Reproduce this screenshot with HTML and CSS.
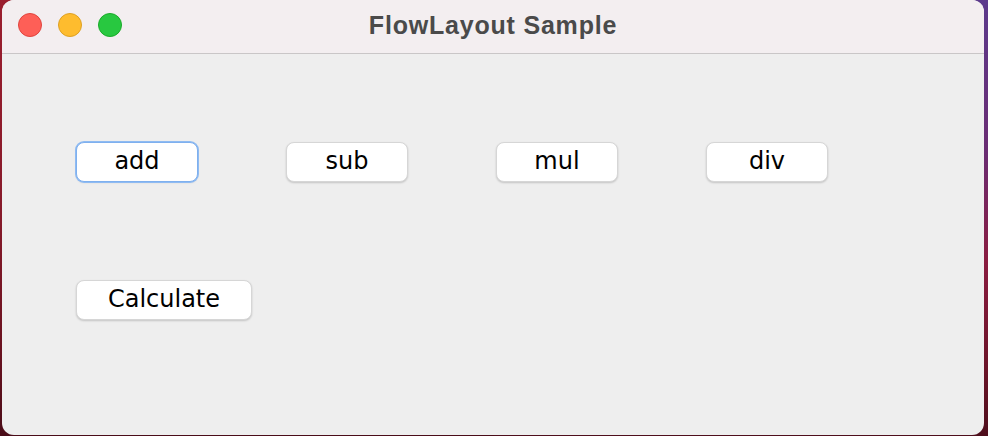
FILE: index.html
```html
<!DOCTYPE html>
<html>
<head>
<meta charset="utf-8">
<link rel="stylesheet" href="styles.css">
</head>
<body>
<div class="window">
  <div class="titlebar">
    <div class="lights">
      <span class="light red"></span>
      <span class="light yellow"></span>
      <span class="light green"></span>
    </div>
    <div class="title">FlowLayout Sample</div>
  </div>
  <div class="content">
    <button class="btn focused">add</button>
    <button class="btn">sub</button>
    <button class="btn">mul</button>
    <button class="btn">div</button>
    <button class="btn wide">Calculate</button>
  </div>
</div>
</body>
</html>
```
FILE: styles.css
```css
html, body {
  margin: 0;
  padding: 0;
  width: 988px;
  height: 436px;
  overflow: hidden;
}
body {
  background:
    linear-gradient(to bottom, #5c3a8c 0%, #6a2c72 35%, #8a1c40 60%, #6a1428 85%, #4e0e1c 100%) right top / 494px 436px no-repeat,
    linear-gradient(to bottom, #9a1e2e 0%, #861a2a 50%, #6a1220 80%, #4a0c18 100%) left top / 494px 436px no-repeat;
}
.window {
  margin-left: 2px;
  width: 982px;
  height: 435px;
  border-radius: 12px;
  overflow: hidden;
  background: #eeeeee;
  display: flex;
  flex-direction: column;
}
.titlebar {
  height: 53px;
  background: #f3eef0;
  border-bottom: 1px solid #c9c6c7;
  position: relative;
  display: flex;
  align-items: center;
  justify-content: center;
  flex-shrink: 0;
}
.lights {
  position: absolute;
  left: 16px;
  top: 13px;
  display: flex;
  gap: 16px;
}
.light {
  width: 24px;
  height: 24px;
  border-radius: 50%;
  box-sizing: border-box;
}
.red { background: #fe5f57; border: 1px solid #e0443e; }
.yellow { background: #febc2e; border: 1px solid #dea123; }
.green { background: #28c840; border: 1px solid #1aab29; }
.title {
  font-family: "Liberation Sans", Arial, sans-serif;
  font-weight: bold;
  font-size: 25px;
  letter-spacing: 0.8px;
  color: #4a4a4a;
  margin-left: 0;
  margin-bottom: 3px;
}
.content {
  padding: 88px 74px 0 74px;
  display: flex;
  flex-wrap: wrap;
  column-gap: 88px;
  row-gap: 98px;
  align-content: flex-start;
}
.btn {
  width: 122px;
  height: 40px;
  box-sizing: border-box;
  background: #ffffff;
  border: 1px solid #d6d6d6;
  border-radius: 8px;
  box-shadow: 0 1px 2px rgba(0,0,0,0.18);
  font-family: "DejaVu Sans", Verdana, sans-serif;
  font-size: 24px;
  color: #000;
  padding: 0 0 2px 0;
  margin: 0;
}
.btn.wide { width: 176px; }
.btn.focused {
  border: 1px solid #7fb0ee;
  box-shadow: 0 0 0 1px #8fbbf2, 0 1px 2px rgba(0,0,0,0.1);
}
```
